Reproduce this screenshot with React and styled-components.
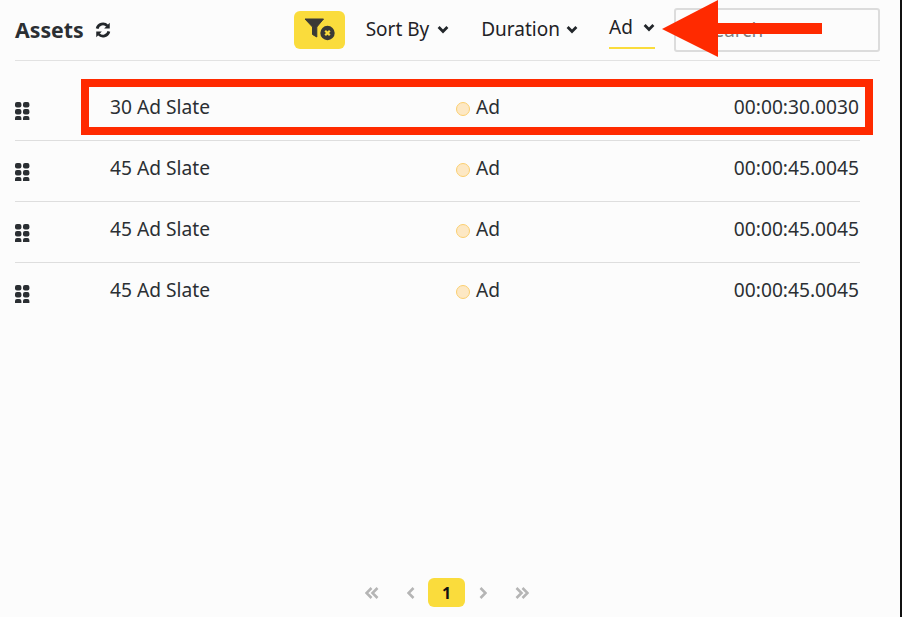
import React from "react";
import styled, { createGlobalStyle } from "styled-components";

const Global = createGlobalStyle`
  html, body { margin: 0; padding: 0; width: 902px; height: 617px; overflow: hidden; background: #111; }
  * { box-sizing: border-box; }
  #root { width: 902px; height: 617px; }
`;

const Page = styled.div`
  position: relative;
  width: 900px;
  height: 617px;
  background: #fcfcfc;
  padding: 0 20px 0 15px;
  display: flex;
  flex-direction: column;
  font-family: "Noto Sans", "Open Sans", sans-serif;
  color: #2b2f33;
  font-size: 19.2px;
`;

const Header = styled.header`
  height: 61px;
  display: flex;
  align-items: center;
  border-bottom: 1px solid #e2e2e2;
  font-size: 19px;
`;

const Title = styled.h1`
  margin: 0;
  font-size: 21.3px;
  font-weight: 700;
  color: #2b2f33;
  line-height: 1;
`;

const Refresh = styled.svg`
  margin-left: 11px;
  width: 16px;
  height: 16px;
`;

const Spacer = styled.div`
  flex: 1;
`;

const FilterButton = styled.button`
  width: 51px;
  height: 38px;
  margin-right: 21px;
  border: 0;
  border-radius: 6px;
  background: #fadc3c;
  display: flex;
  align-items: center;
  justify-content: center;
  padding: 0;
`;

const Dropdown = styled.div`
  display: flex;
  align-items: center;
  height: 38px;
  gap: ${p => p.$gap}px;
  margin-right: ${p => p.$mr}px;
  color: #1f2226;
  margin-top: -2px;
`;

const ActiveDropdown = styled(Dropdown)`
  margin-top: -1px;
  width: 46px;
  height: 39px;
  padding-bottom: 3px;
  border-bottom: 2px solid #fadc3c;
`;

const SearchInput = styled.div`
  width: 206px;
  height: 44px;
  border: 2px solid #dcdcdc;
  border-radius: 3px;
  padding: 0 0 0 27px;
  display: flex;
  align-items: center;
  color: #7d7d7d;
`;

const RowList = styled.div`
  margin-top: 19px;
  width: 845px;
`;

const Row = styled.div`
  height: 61px;
  display: flex;
  align-items: center;
  padding: 0 1px 7px 0;
  border-bottom: 1px solid ${p => (p.$last ? "transparent" : "#dedede")};
`;

const Handle = styled.svg`
  width: 15px;
  height: 18px;
  margin-top: 8px;
  flex: none;
`;

const Name = styled.div`
  margin-left: 80px;
  width: 346px;
`;

const Type = styled.div`
  display: flex;
  align-items: center;
  gap: 6px;
  flex: 1;
`;

const Dot = styled.span`
  width: 14px;
  height: 14px;
  margin-top: 4px;
  border-radius: 50%;
  background: #fde8c4;
  border: 1px solid #fbcf70;
`;

const Duration = styled.div`
  text-align: right;
`;

const Pagination = styled.nav`
  margin-top: auto;
  margin-bottom: 10px;
  padding-right: 1px;
  display: flex;
  align-items: center;
  justify-content: center;
  height: 29px;
`;

const PageArrow = styled.svg`
  height: 14px;
  width: ${p => p.$w}px;
  margin-left: ${p => p.$ml}px;
  flex: none;
`;

const CurrentPage = styled.span`
  width: 37px;
  height: 29px;
  margin-left: 13px;
  border-radius: 6px;
  background: #fadc3c;
  display: flex;
  align-items: center;
  justify-content: center;
  font-size: 16px;
  font-weight: 700;
  color: #111;
`;

const Highlight = styled.div`
  position: absolute;
  left: 81px;
  top: 79px;
  width: 792px;
  height: 56px;
  border: 8px solid #ff2a00;
`;

const Arrow = styled.svg`
  position: absolute;
  left: 660px;
  top: 0;
  width: 165px;
  height: 58px;
`;

const Chevron = () => (
  <svg width="12" height="9" viewBox="0 0 12 9" style={{ flex: "none" }}>
    <path d="M1.6 2 L6 6.4 L10.4 2" fill="none" stroke="#22262a" strokeWidth="2.8" />
  </svg>
);

const Dots = () => (
  <Handle viewBox="0 0 15 18">
    {[0, 7, 14].map(y => [0, 8].map(x => (
      <rect key={`${x}-${y}`} x={x} y={y} width="6.4" height="5.6" rx="2" fill="#2b2f33" />
    )))}
  </Handle>
);

const Double = ({ flip, ml }) => (
  <PageArrow $w={14} $ml={ml} viewBox="0 0 14 14">
    <path
      d={flip ? "M1.5 2 L6.5 7 L1.5 12 M7.5 2 L12.5 7 L7.5 12" : "M6.5 2 L1.5 7 L6.5 12 M12.5 2 L7.5 7 L12.5 12"}
      fill="none" stroke="#b5b5b5" strokeWidth="2.6"
    />
  </PageArrow>
);

const Single = ({ flip, ml }) => (
  <PageArrow $w={8} $ml={ml} viewBox="0 0 8 14">
    <path d={flip ? "M1.5 2 L6.5 7 L1.5 12" : "M6.5 2 L1.5 7 L6.5 12"} fill="none" stroke="#b5b5b5" strokeWidth="2.6" />
  </PageArrow>
);

const rows = [
  ["30 Ad Slate", "00:00:30.0030"],
  ["45 Ad Slate", "00:00:45.0045"],
  ["45 Ad Slate", "00:00:45.0045"],
  ["45 Ad Slate", "00:00:45.0045"],
];

export default function App() {
  return (
    <Page>
      <Global />
      <Header>
        <Title>Assets</Title>
        <Refresh viewBox="0 0 15 15">
          <path d="M2 6.2 A5.6 5.6 0 0 1 11.6 3.6" fill="none" stroke="#22262a" strokeWidth="2.6" />
          <path d="M13.8 0.8 V6 H8.6 Z" fill="#22262a" />
          <path d="M13 8.8 A5.6 5.6 0 0 1 3.4 11.4" fill="none" stroke="#22262a" strokeWidth="2.6" />
          <path d="M1.2 14.2 V9 H6.4 Z" fill="#22262a" />
        </Refresh>
        <Spacer />
        <FilterButton aria-label="Clear filters">
          <svg width="32" height="24" viewBox="0 0 32 24">
            <path d="M2 1 H20.5 L13.8 9 V19 L9.5 16.5 V9 Z" fill="#3a3a36" stroke="#3a3a36" strokeLinejoin="round" />
            <circle cx="24.5" cy="15" r="7.2" fill="#3a3a36" />
            <path d="M22.2 12.7 L26.8 17.3 M26.8 12.7 L22.2 17.3" stroke="#fadc3c" strokeWidth="2.2" />
          </svg>
        </FilterButton>
        <Dropdown $gap={8} $mr={32}>Sort By <Chevron /></Dropdown>
        <Dropdown $gap={6} $mr={31}>Duration <Chevron /></Dropdown>
        <ActiveDropdown $gap={10} $mr={19}>Ad <Chevron /></ActiveDropdown>
        <SearchInput>Search</SearchInput>
      </Header>
      <RowList>
        {rows.map(([name, time], i) => (
          <Row key={i} $last={i === rows.length - 1}>
            <Dots />
            <Name>{name}</Name>
            <Type><Dot />Ad</Type>
            <Duration>{time}</Duration>
          </Row>
        ))}
      </RowList>
      <Pagination>
        <Double ml={0} />
        <Single ml={28} />
        <CurrentPage>1</CurrentPage>
        <Single flip ml={14} />
        <Double flip ml={28} />
      </Pagination>
      <Highlight />
      <Arrow viewBox="0 0 165 58">
        <polygon points="2,29 58,0 58,57" fill="#ff2a00" />
        <rect x="50" y="23" width="112" height="11" fill="#ff2a00" />
      </Arrow>
    </Page>
  );
}
